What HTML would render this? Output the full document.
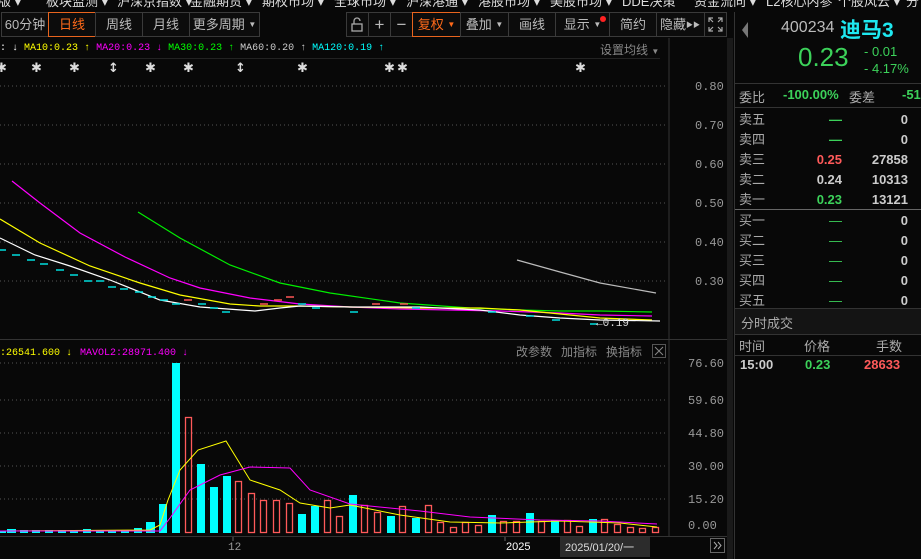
<!DOCTYPE html>
<html><head><meta charset="utf-8"><style>
*{margin:0;padding:0;box-sizing:border-box}
body{width:921px;height:559px;background:#080808;overflow:hidden;position:relative;font-family:"Liberation Sans","Noto Sans CJK SC",sans-serif;color:#c8c8c8}
.a{position:absolute;white-space:nowrap}
.menu{top:-9px;font-size:13px;color:#ddd}
.tb{position:absolute;top:12px;height:25px;border:1px solid #3a3a3a;font-size:13px;color:#bbb;text-align:center;line-height:23px;background:#0c0c0c;overflow:hidden}
.tb.o{border-color:#e8641e;color:#ff6a1a}
.mono{font-family:"Liberation Mono","Noto Sans CJK SC",monospace}
.r{font-size:13px;color:#aaa}
</style></head><body>
<!-- top menu -->
<div class="a menu" style="left:-2px">版 ▾</div>
<div class="a menu" style="left:46px">板块监测 ▾</div>
<div class="a menu" style="left:117px">沪深京指数 ▾</div>
<div class="a menu" style="left:190px">金融期货 ▾</div>
<div class="a menu" style="left:262px">期权市场 ▾</div>
<div class="a menu" style="left:334px">全球市场 ▾</div>
<div class="a menu" style="left:406px">沪深港通 ▾</div>
<div class="a menu" style="left:478px">港股市场 ▾</div>
<div class="a menu" style="left:550px">美股市场 ▾</div>
<div class="a menu" style="left:622px">DDE决策</div>
<div class="a menu" style="left:694px">资金流向 ▾</div>
<div class="a menu" style="left:766px">L2核心内参</div>
<div class="a menu" style="left:838px">个股风云 ▾</div>
<div class="a menu" style="left:906px">分</div>
<!-- toolbar -->
<div class="tb" style="left:1px;width:48px">60分钟</div>
<div class="tb o" style="left:48px;width:48px">日线</div>
<div class="tb" style="left:95px;width:48px">周线</div>
<div class="tb" style="left:142px;width:48px">月线</div>
<div class="tb" style="left:189px;width:71px">更多周期 <span style="font-size:8px;vertical-align:2px">▼</span></div>
<div class="tb" style="left:346px;width:23px"><svg width="21" height="23" viewBox="0 0 21 23"><path d="M7 11V8a3 3 0 0 1 6 0" fill="none" stroke="#aaa" stroke-width="1.3"/><rect x="5" y="11" width="10" height="7" fill="none" stroke="#aaa" stroke-width="1.3"/></svg></div>
<div class="tb" style="left:368px;width:23px;font-size:17px">+</div>
<div class="tb" style="left:390px;width:23px;font-size:17px">−</div>
<div class="tb o" style="left:412px;width:49px">复权 <span style="font-size:8px;vertical-align:2px">▼</span></div>
<div class="tb" style="left:460px;width:49px">叠加 <span style="font-size:8px;vertical-align:2px">▼</span></div>
<div class="tb" style="left:508px;width:48px">画线</div>
<div class="tb" style="left:555px;width:55px">显示 <span style="font-size:8px;vertical-align:2px">▼</span><span style="position:absolute;right:3px;top:3px;width:6px;height:6px;border-radius:3px;background:#f22"></span></div>
<div class="tb" style="left:609px;width:48px">简约</div>
<div class="tb" style="left:656px;width:49px;text-align:left;padding-left:3px">隐藏<span style="font-size:7px;vertical-align:2px">▶▶</span></div>
<div class="tb" style="left:704px;width:23px"><svg width="21" height="23" viewBox="0 0 21 23"><g fill="none" stroke="#aaa" stroke-width="1.2"><path d="M4 9V5h4M13 5h4v4M17 14v4h-4M8 18H4v-4M4 5l4 4M17 5l-4 4M17 18l-4-4M4 18l4-4"/></g></svg></div>
<!-- legend -->
<div class="a mono" style="left:0;top:43px;font-size:10px">
<span style="color:#fff">: ↓</span> <span style="color:#ff0">MA10:0.23 ↑</span> <span style="color:#f0f">MA20:0.23 ↓</span> <span style="color:#0f0">MA30:0.23 ↑</span> <span style="color:#ccc">MA60:0.20 ↑</span> <span style="color:#0ff">MA120:0.19 ↑</span></div>
<div class="a" style="left:600px;top:41px;font-size:12px;color:#888">设置均线 <span style="font-size:8px">▼</span></div>
<div class="a" style="left:0;top:58px;width:660px;height:1px;background:#222"></div>
<svg class="a" style="left:0;top:0" width="921" height="559">
<!-- stars -->
<g fill="#ddd" font-size="13" font-weight="bold" font-family="DejaVu Sans">
<text x="-4" y="72">✱</text><text x="31" y="72">✱</text><text x="69" y="72">✱</text><text x="108" y="72">↕</text><text x="145" y="72">✱</text><text x="183" y="72">✱</text><text x="235" y="72">↕</text><text x="297" y="72">✱</text><text x="384" y="72">✱</text><text x="397" y="72">✱</text><text x="575" y="72">✱</text>
</g>
<!-- separators -->
<line x1="669" y1="38" x2="669" y2="536" stroke="#333"/>
<rect x="727" y="38" width="6" height="521" fill="#1a1a1a"/>
<line x1="0" y1="339.5" x2="727" y2="339.5" stroke="#333"/>
<line x1="0" y1="536.5" x2="727" y2="536.5" stroke="#333"/>
<line x1="734.5" y1="12" x2="734.5" y2="559" stroke="#333"/>
<!-- grid -->
<g stroke="#555" stroke-dasharray="1 3">
<line x1="0" y1="86" x2="667" y2="86"/><line x1="0" y1="125" x2="667" y2="125"/><line x1="0" y1="164" x2="667" y2="164"/><line x1="0" y1="203" x2="667" y2="203"/><line x1="0" y1="242" x2="667" y2="242"/><line x1="0" y1="281" x2="667" y2="281"/>
<line x1="0" y1="363" x2="667" y2="363"/><line x1="0" y1="400" x2="667" y2="400"/><line x1="0" y1="433" x2="667" y2="433"/><line x1="0" y1="466" x2="667" y2="466"/><line x1="0" y1="499" x2="667" y2="499"/>
</g>
<g fill="#999" font-size="12" font-family="Liberation Mono">
<text x="695" y="90">0.80</text><text x="695" y="129">0.70</text><text x="695" y="168">0.60</text><text x="695" y="207">0.50</text><text x="695" y="246">0.40</text><text x="695" y="285">0.30</text>
<text x="688" y="367">76.60</text><text x="688" y="404">59.60</text><text x="688" y="437">44.80</text><text x="688" y="470">30.00</text><text x="688" y="503">15.20</text><text x="688" y="529">0.00</text>
</g>
<!-- price lines -->
<g fill="none" stroke-width="1.2">
<polyline stroke="#f0f" points="12,181 40,203 80,233 125,257 170,278 200,288 250,298 300,304 350,307 400,309 450,310 500,311 560,313 600,315 652,316"/>
<polyline stroke="#0e0" points="138,212 180,238 230,265 280,283 330,293 400,303 470,308 520,310 560,311 600,311 652,312"/>
<polyline stroke="#ff0" points="0,219 40,243 90,266 140,283 180,295 230,304 260,306 300,306 350,307 420,308 480,308 520,310 560,314 600,318 652,320"/>
<polyline stroke="#fff" points="0,238 35,255 70,266 110,280 160,300 200,307 255,311 280,308 300,306 350,307 420,307 480,310 520,315 560,318 600,320 660,321"/>
<polyline stroke="#bbb" points="517,260 560,272 600,283 656,293"/>
</g>
<g stroke="#0dd" stroke-width="1.5">
<line x1="0" y1="250" x2="6" y2="250"/><line x1="12" y1="255" x2="20" y2="255"/><line x1="27" y1="260" x2="35" y2="260"/><line x1="40" y1="264" x2="48" y2="264"/><line x1="56" y1="270" x2="64" y2="270"/><line x1="70" y1="275" x2="78" y2="275"/><line x1="84" y1="281" x2="92" y2="281"/><line x1="96" y1="281" x2="104" y2="281"/><line x1="108" y1="287" x2="116" y2="287"/><line x1="120" y1="289" x2="128" y2="289"/><line x1="135" y1="292" x2="143" y2="292"/><line x1="148" y1="297" x2="156" y2="297"/><line x1="160" y1="300" x2="168" y2="300"/><line x1="172" y1="304" x2="180" y2="304"/><line x1="198" y1="304" x2="206" y2="304"/><line x1="210" y1="308" x2="218" y2="308"/><line x1="222" y1="312" x2="230" y2="312"/><line x1="298" y1="304" x2="306" y2="304"/><line x1="312" y1="308" x2="320" y2="308"/><line x1="350" y1="312" x2="358" y2="312"/><line x1="412" y1="308" x2="420" y2="308"/><line x1="488" y1="312" x2="496" y2="312"/><line x1="526" y1="316" x2="534" y2="316"/><line x1="552" y1="320" x2="560" y2="320"/><line x1="590" y1="324" x2="598" y2="324"/></g>
<g stroke="#f55" stroke-width="1.5"><line x1="184" y1="300" x2="192" y2="300"/><line x1="260" y1="304" x2="268" y2="304"/><line x1="274" y1="300" x2="282" y2="300"/><line x1="286" y1="297" x2="294" y2="297"/><line x1="372" y1="304" x2="380" y2="304"/><line x1="400" y1="304" x2="408" y2="304"/></g>
<text x="596" y="326" fill="#ddd" font-size="11" font-family="Liberation Mono">←0.19</text>
<!-- volume header -->
<text x="0" y="355" font-size="10" font-family="Liberation Mono" fill="#ff0">:26541.600 ↓</text>
<text x="80" y="355" font-size="10" font-family="Liberation Mono" fill="#f0f">MAVOL2:28971.400 ↓</text>
<g fill="#888" font-size="12" font-family="Noto Sans CJK SC"><text x="516" y="356">改参数</text><text x="561" y="356">加指标</text><text x="606" y="356">换指标</text></g>
<rect x="652.5" y="344.5" width="13" height="13" fill="none" stroke="#555"/><path d="M655 347l8 8M663 347l-8 8" stroke="#888"/>
<!-- volume bars -->
<g fill="#0ff">
<rect x="0" y="531" width="6" height="2"/><rect x="7" y="529" width="9" height="4"/><rect x="20" y="530" width="8" height="3"/><rect x="32" y="530" width="8" height="3"/><rect x="45" y="530" width="8" height="3"/><rect x="58" y="530" width="8" height="3"/><rect x="70" y="530" width="8" height="3"/><rect x="83" y="529" width="8" height="4"/><rect x="96" y="530" width="8" height="3"/><rect x="108" y="530" width="8" height="3"/><rect x="121" y="530" width="8" height="3"/><rect x="134" y="528" width="8" height="5"/><rect x="146" y="522" width="9" height="11"/><rect x="159" y="504" width="8" height="29"/>
<rect x="172" y="363" width="8" height="170"/><rect x="197" y="464" width="8" height="69"/><rect x="210" y="487" width="8" height="46"/><rect x="223" y="476" width="8" height="57"/><rect x="298" y="514" width="8" height="19"/><rect x="311" y="506" width="8" height="27"/><rect x="349" y="495" width="8" height="38"/><rect x="387" y="516" width="8" height="17"/><rect x="412" y="518" width="8" height="15"/><rect x="488" y="515" width="8" height="18"/><rect x="526" y="513" width="8" height="20"/><rect x="551" y="520" width="8" height="13"/><rect x="589" y="519" width="8" height="14"/>
</g>
<g fill="none" stroke="#ff5a5a" stroke-width="1.3">
<rect x="185.5" y="417.5" width="6" height="115"/><rect x="235.5" y="481.5" width="6" height="51"/><rect x="248.5" y="493.5" width="6" height="39"/><rect x="260.5" y="500.5" width="6" height="32"/><rect x="273.5" y="500.5" width="6" height="32"/><rect x="286.5" y="503.5" width="6" height="29"/><rect x="324.5" y="500.5" width="6" height="32"/><rect x="336.5" y="516.5" width="6" height="16"/><rect x="361.5" y="505.5" width="6" height="27"/><rect x="374.5" y="512.5" width="6" height="20"/><rect x="399.5" y="506.5" width="6" height="26"/><rect x="425.5" y="505.5" width="6" height="27"/><rect x="437.5" y="522.5" width="6" height="10"/><rect x="450.5" y="527.5" width="6" height="5"/><rect x="462.5" y="522.5" width="6" height="10"/><rect x="475.5" y="525.5" width="6" height="7"/><rect x="500.5" y="521.5" width="6" height="11"/><rect x="513.5" y="521.5" width="6" height="11"/><rect x="538.5" y="521.5" width="6" height="11"/><rect x="564.5" y="520.5" width="6" height="12"/><rect x="576.5" y="526.5" width="6" height="6"/><rect x="601.5" y="519.5" width="6" height="13"/><rect x="614.5" y="524.5" width="6" height="8"/><rect x="627.5" y="527.5" width="6" height="5"/><rect x="639.5" y="528.5" width="6" height="4"/><rect x="652.5" y="527.5" width="6" height="5"/>
</g>
<polyline fill="none" stroke="#ff0" points="0,531 150,530 160,525 168,500 180,470 198,450 226,441 250,480 280,490 300,503 330,508 350,505 400,515 450,522 500,523 560,521 620,523 657,527"/>
<polyline fill="none" stroke="#f0f" points="0,531 160,531 170,518 190,490 220,475 250,467 290,468 310,490 350,504 420,511 470,517 540,520 600,521 657,524"/>
<!-- date axis -->
<line x1="233" y1="537" x2="233" y2="541" stroke="#666"/><line x1="505" y1="537" x2="505" y2="541" stroke="#666"/>
<text x="228" y="550" fill="#999" font-size="11" font-family="Liberation Mono">12</text>
<text x="506" y="550" fill="#fff" font-size="11" font-family="Liberation Sans">2025</text>
<rect x="560" y="537" width="90" height="20" fill="#2c2c2c"/>
<text x="565" y="551" fill="#ddd" font-size="11" font-family="Liberation Sans,Noto Sans CJK SC">2025/01/20/一</text>
<rect x="710.5" y="538.5" width="14" height="14" fill="none" stroke="#666"/><path d="M714 542l3 3.5-3 3.5M718 542l3 3.5-3 3.5" fill="none" stroke="#aaa"/>
<!-- right panel lines -->
<g stroke="#333"><line x1="735" y1="83.5" x2="921" y2="83.5"/><line x1="735" y1="107.5" x2="921" y2="107.5"/><line x1="735" y1="209.5" x2="921" y2="209.5" stroke="#666"/><line x1="735" y1="308.5" x2="921" y2="308.5"/><line x1="735" y1="334.5" x2="921" y2="334.5"/><line x1="735" y1="355.5" x2="921" y2="355.5"/></g>
<rect x="735" y="309" width="186" height="25" fill="#141414"/>
<polygon points="748,22 742,30 748,38" fill="#777"/>
</svg>
<!-- right panel text -->
<div class="a" style="left:781px;top:19px;font-size:16px;color:#bbb">400234</div>
<div class="a" style="left:840px;top:14px;font-size:21px;color:#1ee8f0;font-weight:bold">迪马3</div>
<div class="a" style="left:798px;top:42px;font-size:26px;color:#3cd25a">0.23</div>
<div class="a" style="left:864px;top:44px;font-size:13px;color:#3cd25a">- 0.01</div>
<div class="a" style="left:864px;top:61px;font-size:13px;color:#3cd25a">- 4.17%</div>
<div class="a r" style="left:739px;top:87px">委比</div>
<div class="a" style="left:783px;top:87px;font-size:13px;color:#3cd25a;font-weight:bold">-100.00%</div>
<div class="a r" style="left:849px;top:87px">委差</div>
<div class="a" style="left:902px;top:87px;font-size:13px;color:#3cd25a;font-weight:bold">-51</div>
<div class="a r" style="left:739px;top:110px;line-height:20px">卖五<br>卖四<br>卖三<br>卖二<br>卖一</div>
<div class="a" style="left:810px;top:110px;line-height:20px;font-size:13px;font-weight:bold;text-align:right;width:32px"><span style="color:#3cd25a">—</span><br><span style="color:#3cd25a">—</span><br><span style="color:#ff5a5a">0.25</span><br><span style="color:#ccc">0.24</span><br><span style="color:#3cd25a">0.23</span></div>
<div class="a" style="left:858px;top:110px;line-height:20px;font-size:13px;font-weight:bold;text-align:right;width:50px;color:#ccc">0<br>0<br>27858<br>10313<br>13121</div>
<div class="a r" style="left:739px;top:211px;line-height:20px">买一<br>买二<br>买三<br>买四<br>买五</div>
<div class="a" style="left:810px;top:211px;line-height:20px;font-size:13px;text-align:right;width:32px;color:#3cd25a">—<br>—<br>—<br>—<br>—</div>
<div class="a" style="left:858px;top:211px;line-height:20px;font-size:13px;font-weight:bold;text-align:right;width:50px;color:#ccc">0<br>0<br>0<br>0<br>0</div>
<div class="a" style="left:741px;top:313px;font-size:13px;color:#aaa">分时成交</div>
<div class="a r" style="left:739px;top:336px">时间</div>
<div class="a r" style="left:804px;top:336px">价格</div>
<div class="a r" style="left:876px;top:336px">手数</div>
<div class="a" style="left:740px;top:357px;font-size:13px;font-weight:bold;color:#ccc">15:00</div>
<div class="a" style="left:805px;top:357px;font-size:13px;font-weight:bold;color:#3cd25a">0.23</div>
<div class="a" style="left:864px;top:357px;font-size:13px;font-weight:bold;color:#ff5a5a">28633</div>
</body></html>
